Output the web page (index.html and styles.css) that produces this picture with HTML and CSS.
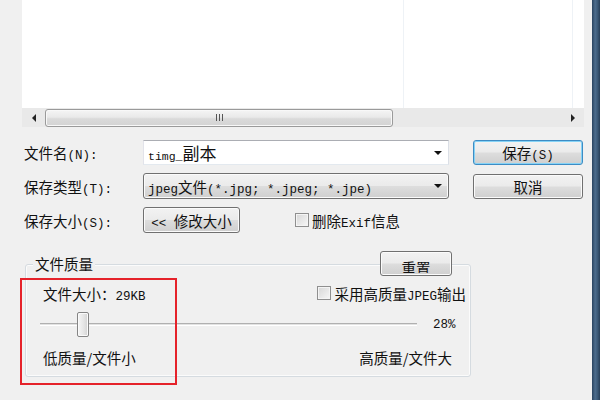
FILE: index.html
```html
<!DOCTYPE html>
<html lang="zh-CN">
<head>
    <meta charset="UTF-8">
    <meta name="viewport" content="width=device-width, initial-scale=1.0">
    <title>另存为</title>
    <link rel="stylesheet" href="styles.css">
</head>
<body>
    <div class="window">
        <div class="dialog">
            <!-- file list (scrolled to the bottom) -->
            <div class="file-list">
                <div class="col"></div>
                <div class="col"></div>
                <div class="col"></div>
            </div>
            <div class="hscroll">
                <span class="scroll-btn"><i class="tri tri-left"></i></span>
                <span class="scroll-thumb"><i class="grip"></i></span>
                <span class="scroll-track"></span>
                <span class="scroll-btn"><i class="tri tri-right"></i></span>
            </div>

            <div class="form">
                <label class="label">文件名<span class="lat">(N):</span></label>
                <div class="combo combo-edit">
                    <span class="edit-text"><span class="lat">timg_</span>副本</span>
                    <i class="tri tri-down"></i>
                </div>
                <button class="btn btn-side btn-default"><span>保存<span class="lat">(S)</span></span></button>

                <label class="label">保存类型<span class="lat">(T):</span></label>
                <div class="combo combo-list">
                    <span><span class="lat">jpeg</span>文件<span class="lat">(*.jpg; *.jpeg; *.jpe)</span></span>
                    <i class="tri tri-down"></i>
                </div>
                <button class="btn btn-side"><span>取消</span></button>

                <label class="label">保存大小<span class="lat">(S):</span></label>
                <div class="size-field">
                    <button class="btn btn-resize"><span><span class="lat">&lt;&lt;&nbsp;</span>修改大小</span></button>
                    <label class="check-label exif"><i class="check"></i><span>删除<span class="lat">Exif</span>信息</span></label>
                </div>
            </div>

            <div class="group">
                <div class="group-head">
                    <span class="group-title">文件质量</span>
                    <button class="btn btn-reset"><span>重置</span></button>
                </div>
                <div class="group-row">
                    <span>文件大小：<span class="lat">29KB</span></span>
                    <label class="check-label"><i class="check"></i><span>采用高质量<span class="lat">JPEG</span>输出</span></label>
                </div>
                <div class="slider-row">
                    <div class="slider">
                        <i class="slider-thumb"></i>
                    </div>
                    <span class="slider-value lat">28%</span>
                </div>
                <div class="group-row ends">
                    <span>低质量/文件小</span>
                    <span>高质量/文件大</span>
                </div>
            </div>
        </div>
        <div class="frame"></div>
        <div class="mark"></div>
    </div>
</body>
</html>
```

FILE: styles.css
```css
/* Save dialog, Win7 look */
* {
    box-sizing: border-box;
}
body {
    margin: 0;
    background: #f0f0f0;
    font-family: "Noto Sans CJK SC", "Noto Sans", sans-serif;
    font-size: 14.5px;
    color: #111;
}
.lat {
    font-family: "Liberation Mono", "DejaVu Sans Mono", monospace;
    font-size: 12.5px;
}
button {
    font: inherit;
    color: inherit;
    padding: 0;
}
.window {
    position: relative;
    display: flex;
    width: 600px;
    height: 400px;
    overflow: hidden;
}
.dialog {
    flex: 1;
    padding: 0 8px 0 22px;
}
.frame {
    width: 8px;
    background: linear-gradient(to right, #2a4460, #4d6d8d 40%, #3b5977 70%, #283f58);
}

/* file list */
.file-list {
    height: 108px;
    background: #fff;
    display: grid;
    grid-template-columns: 382px 169px 1fr;
}
.file-list .col {
    border-right: 1px solid #eef2f6;
}
.file-list .col:last-child {
    border-right: 0;
}
.hscroll {
    height: 19px;
    display: flex;
    align-items: center;
    background: #e9e9e9;
}
.scroll-btn {
    width: 23px;
    height: 19px;
    display: flex;
    align-items: center;
    justify-content: center;
}
.scroll-btn:last-child {
    width: 22px;
}
.scroll-thumb {
    width: 348px;
    height: 18px;
    border: 1px solid #9a9a9a;
    border-radius: 3px;
    background: linear-gradient(#f5f5f5, #e9e9e9 45%, #dadada 55%, #d3d3d3);
    box-shadow: inset 0 0 0 1px #f8f8f8;
    display: flex;
    align-items: center;
    justify-content: center;
}
.scroll-track {
    flex: 1;
}
.grip {
    width: 7px;
    height: 7px;
    background: repeating-linear-gradient(to right, #555 0 1px, transparent 1px 3px);
}
.tri {
    width: 0;
    height: 0;
    border: 4px solid transparent;
}
.tri-left {
    border-left-width: 0;
    border-right-color: #222;
}
.tri-right {
    border-right-width: 0;
    border-left-color: #222;
}
.tri-down {
    border-bottom-width: 0;
    border-top-color: #111;
}

/* form rows */
.form {
    display: grid;
    grid-template-columns: 119px 306px 134px;
    grid-template-rows: 25px 26px 26px;
    row-gap: 8px;
    align-items: center;
    padding: 13px 0 0 2px;
}
.label {
    white-space: nowrap;
}
.combo {
    height: 100%;
    display: flex;
    align-items: center;
    justify-content: space-between;
    padding: 0 6px 0 4px;
    white-space: nowrap;
}
.combo-edit {
    background: #fff;
    border: 1px solid;
    border-color: #abadb3 #dbdfe6 #e3e9ef #e2e3ea;
}
.edit-text {
    font-size: 17px;
}
.edit-text .lat {
    font-size: 11.5px;
}
.combo-list,
.btn {
    border: 1px solid #707070;
    border-radius: 3px;
    background: linear-gradient(#f2f2f2, #ebebeb 48%, #dddddd 52%, #cfcfcf);
    box-shadow: inset 0 0 0 1px #fbfbfb;
}
.btn {
    height: 25px;
    display: flex;
    align-items: center;
    justify-content: center;
    white-space: nowrap;
}
.btn-side {
    width: 110px;
    margin-left: 24px;
}
.btn-default {
    border-color: #3d8cc4;
    box-shadow: inset 0 0 0 1px #86d3f6;
}
.size-field {
    grid-column: 2 / 4;
    display: flex;
    align-items: center;
    height: 100%;
}
.btn-resize {
    width: 97px;
    height: 26px;
}
.check-label {
    display: flex;
    align-items: center;
    gap: 3px;
    white-space: nowrap;
}
.exif {
    margin-left: 55px;
}
.check {
    flex: none;
    width: 14px;
    height: 14px;
    border: 1px solid #8f8f8f;
    background: linear-gradient(135deg, #d6d6d6, #f7f7f7);
    box-shadow: inset 0 0 0 1px #f4f4f4;
}

/* quality group */
.group {
    width: 446px;
    margin: 31px 0 0 3px;
    padding-bottom: 10px;
    border: 1px solid #d5dbe0;
    border-radius: 3px;
    box-shadow: inset 0 0 0 1px #fbfbfb;
}
.group-head {
    display: flex;
    align-items: center;
    justify-content: space-between;
    height: 25px;
    margin-top: -14px;
    padding: 0 18px 0 7px;
}
.group-title {
    background: #f0f0f0;
    padding: 0 2px;
    line-height: 18px;
}
.btn-reset {
    width: 72px;
    display: block;
    padding-top: 2px;
}
.btn-reset span {
    display: block;
    height: 16px;
    overflow: hidden;
    line-height: 22px;
}
.group-row {
    display: flex;
    align-items: center;
    justify-content: space-between;
    height: 18px;
    margin-top: 8px;
    padding: 0 4px 0 17px;
}
.group-row.ends {
    margin-top: 11px;
    padding-right: 18px;
}
.slider-row {
    display: flex;
    align-items: center;
    height: 25px;
    margin-top: 10px;
    padding-left: 14px;
}
.slider {
    position: relative;
    width: 377px;
    height: 3px;
    border-top: 1px solid #b0b0b0;
    border-bottom: 1px solid #fff;
    background: #e2e2e2;
}
.slider-thumb {
    position: absolute;
    left: 37px;
    top: -12px;
    width: 12px;
    height: 25px;
    border: 1px solid #858585;
    border-radius: 2px;
    background: linear-gradient(to right, #f6f6f6, #e4e4e4 60%, #d2d2d2);
    box-shadow: inset 0 0 0 1px #fafafa;
}
.slider-value {
    margin-left: 16px;
}

/* red annotation box */
.mark {
    position: absolute;
    left: 20px;
    top: 278px;
    width: 157px;
    height: 107px;
    border: 2px solid #e5222a;
}
```
